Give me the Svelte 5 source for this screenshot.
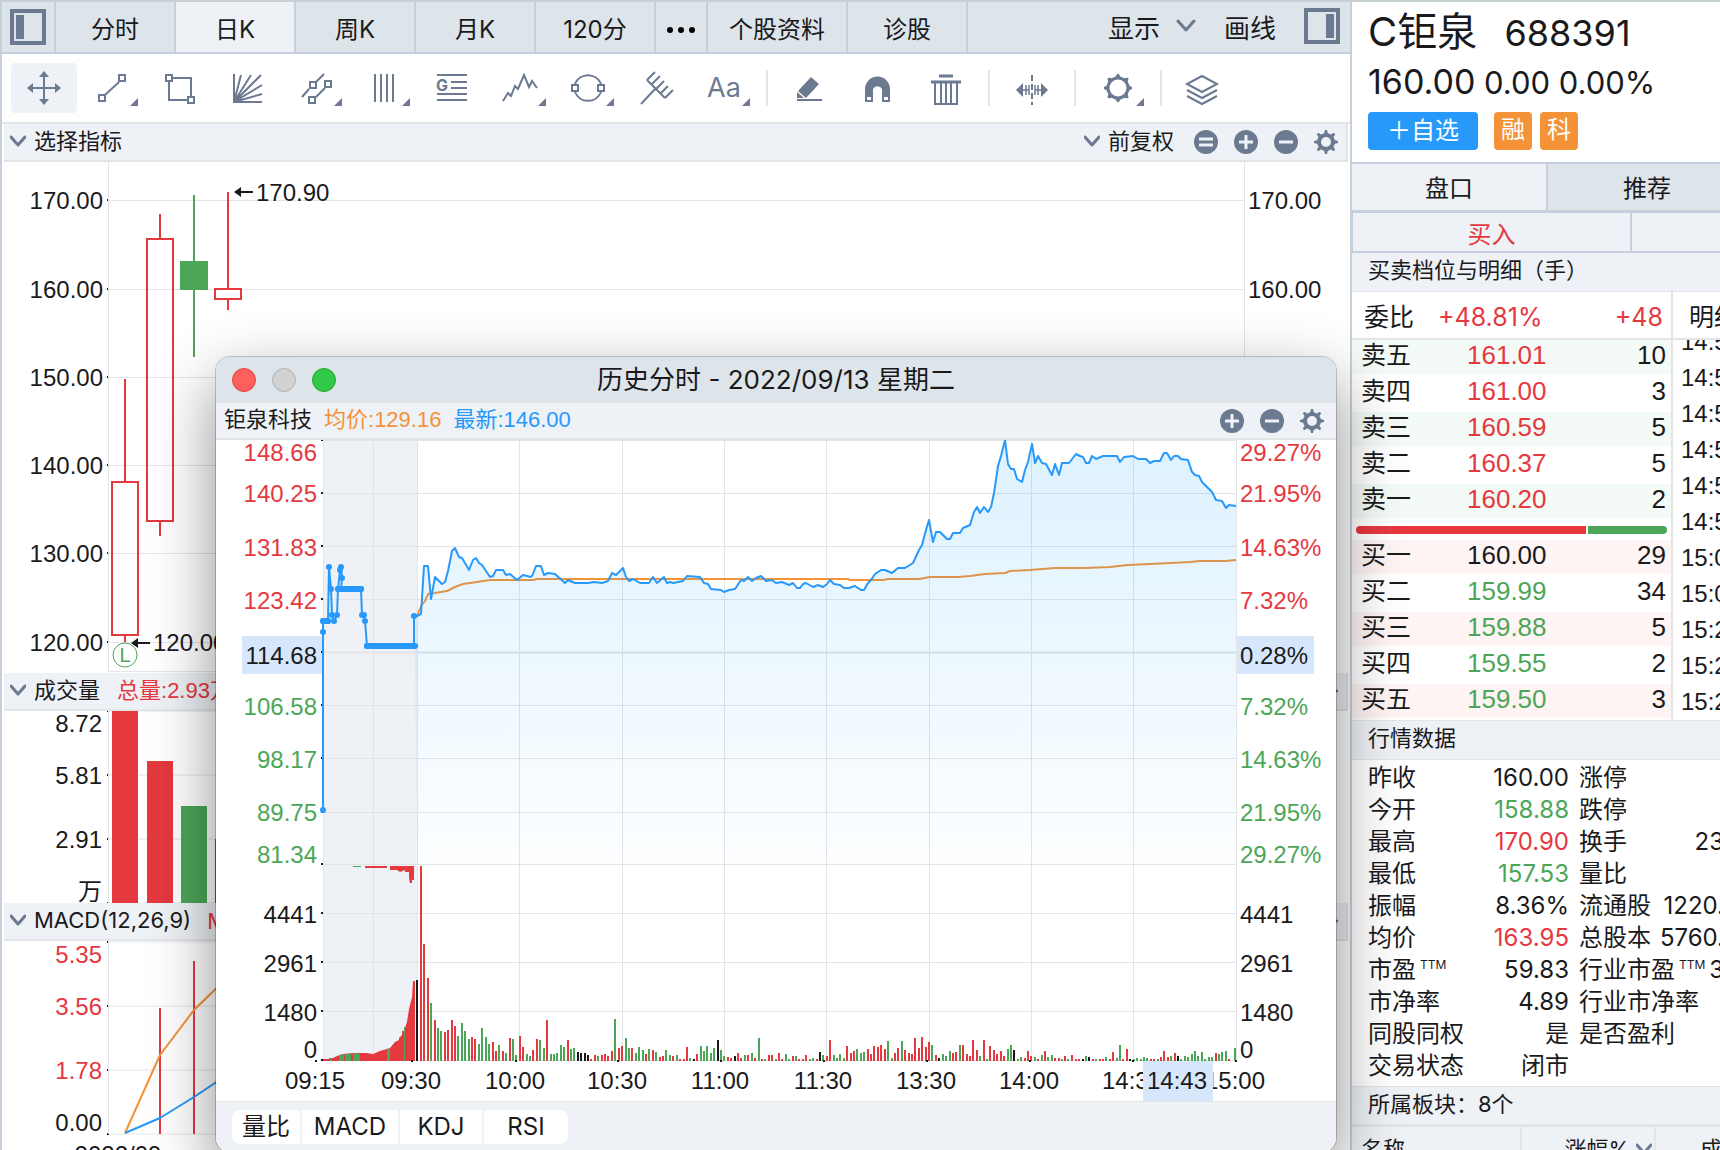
<script>
  let activePeriod = $state('日K');
  let sideTab = $state('盘口');

  const periods = ['分时', '日K', '周K', '月K', '120分'];

  const mainGrid = [
    ['170.00', 200],
    ['160.00', 289],
    ['150.00', 377],
    ['140.00', 465],
    ['130.00', 553],
    ['120.00', 642],
  ];
  const volumeGrid = [
    ['8.72', 711, 724],
    ['5.81', 775, 776],
    ['2.91', 839, 840],
    ['万', 903, 892],
  ];
  const macdGrid = [
    ['5.35', 942, 955, 'up'],
    ['3.56', 1006, 1007, 'up'],
    ['1.78', 1070, 1071, 'up'],
    ['0.00', 1134, 1123, 'flat'],
  ];

  const priceGrid = [
    ['148.66', '29.27%', 441, 454, 'up'],
    ['140.25', '21.95%', 494, 495, 'up'],
    ['131.83', '14.63%', 547, 549, 'up'],
    ['123.42', '7.32%', 600, 602, 'up'],
    ['114.68', '0.28%', 653, 657, 'flat'],
    ['106.58', '7.32%', 706, 708, 'down'],
    ['98.17', '14.63%', 759, 761, 'down'],
    ['89.75', '21.95%', 813, 814, 'down'],
    ['81.34', '29.27%', 865, 856, 'down'],
    ['4441', '4441', 914, 916, 'flat'],
    ['2961', '2961', 963, 965, 'flat'],
    ['1480', '1480', 1012, 1014, 'flat'],
    ['0', '0', 1061, 1051, 'flat'],
  ];
  const columns = [323, 373, 417, 519, 622, 724, 826, 929, 1031, 1133, 1236];
  const times = [
    ['09:15', 315],
    ['09:30', 411],
    ['10:00', 515],
    ['10:30', 617],
    ['11:00', 720],
    ['11:30', 823],
    ['13:30', 926],
    ['14:00', 1029],
    ['14:30', 1132],
    ['15:00', 1235],
  ];

  const price =
    '414,617 417,617 421,615 424,567 428,567 431,600 435,578 442,585 445,583 448,572 452,552 455,549 459,558 462,559 465,564 469,571 473,561 476,559 479,564 482,566 490,578 493,577 496,571 503,571 506,576 510,575 517,581 523,576 531,578 533,575 536,567 541,567 544,576 548,574 555,575 565,584 568,581 575,584 588,584 594,583 602,584 608,582 612,574 616,576 623,569 626,578 629,582 633,580 640,584 649,584 653,578 657,584 664,578 667,584 670,583 673,584 683,582 687,577 700,578 704,584 708,585 711,590 721,591 724,593 729,591 735,590 741,581 744,582 748,578 752,582 756,579 761,577 766,582 772,581 776,584 782,583 789,586 793,584 797,589 800,589 803,585 806,584 813,588 818,586 823,588 827,585 830,581 834,585 840,586 844,589 849,589 855,587 861,591 864,591 868,584 871,581 875,575 881,571 885,571 892,574 898,569 905,569 913,564 919,551 922,546 926,531 929,521 933,543 936,533 940,533 947,540 950,540 953,534 960,534 963,529 970,526 974,513 977,508 980,514 984,508 988,513 991,508 994,494 998,467 1001,457 1005,441 1008,465 1011,470 1014,470 1017,480 1022,483 1025,471 1028,463 1032,445 1035,464 1038,457 1042,464 1046,465 1052,476 1055,465 1059,476 1062,464 1069,464 1076,455 1080,457 1083,458 1086,464 1089,464 1092,457 1096,460 1103,457 1117,457 1120,463 1124,458 1133,457 1138,460 1146,460 1150,464 1154,462 1160,462 1164,454 1167,454 1171,461 1174,457 1178,457 1181,460 1188,461 1192,473 1195,476 1199,477 1202,483 1212,493 1216,501 1222,502 1226,509 1229,506 1236,507';
  const average =
    '417,617 421,607 425,602 428,595 435,594 447,592 455,588 463,585 477,583 490,581 533,581 537,580 848,580 850,581 883,581 888,580 919,580 930,578 958,578 970,577 985,575 1005,574 1010,572 1030,571 1055,569 1085,569 1110,568 1128,566 1150,565 1170,564 1190,563 1200,562 1225,562 1236,561';
  const auction = [
    [323, 811], [323, 633], [323, 622], [328, 622], [329, 568], [331, 590], [332, 616], [334, 622],
    [337, 616], [338, 590], [340, 571], [341, 568], [342, 579], [341, 590], [361, 590], [362, 616],
    [364, 616], [365, 622], [367, 647], [414, 647], [414, 617],
  ];

  // x,height pairs measured up from the volume baseline
  const volume = {
    up: '421,195 424,117 428,83 435,41 445,29 448,31 452,41 455,35 472,24 475,22 493,19 496,10 503,10 510,23 520,25 523,14 533,11 537,22 547,41 568,21 591,2 595,6 602,6 605,7 608,5 612,10 619,13 622,15 632,13 646,7 653,11 660,4 663,5 673,5 680,2 684,2 687,14 697,7 728,4 731,3 738,8 741,3 748,6 755,3 762,2 769,6 772,6 779,8 782,2 793,5 799,2 803,2 806,6 817,2 827,5 830,21 847,15 851,8 854,10 868,12 871,7 874,15 878,14 881,16 885,12 895,8 898,13 905,11 909,8 912,7 915,23 919,13 922,24 926,14 929,19 936,6 953,8 956,9 963,16 967,7 970,5 973,21 977,11 984,21 990,15 994,11 997,7 1001,10 1004,5 1025,3 1028,10 1031,5 1038,2 1045,10 1055,3 1059,3 1065,5 1072,6 1076,2 1079,2 1093,2 1100,2 1103,2 1110,2 1113,9 1123,2 1127,12 1151,2 1154,2 1161,4 1164,10 1168,4 1175,8 1216,8 1229,2',
    down: '431,58 438,33 441,30 458,25 462,38 465,30 469,22 479,17 482,33 486,24 489,17 499,16 506,8 513,22 516,6 527,7 530,5 540,21 544,13 551,7 554,7 557,8 561,16 564,14 571,12 574,13 598,5 615,42 626,23 629,13 636,8 639,14 643,11 649,12 656,9 666,11 670,6 677,6 690,3 701,15 704,10 707,15 711,8 714,13 721,11 724,5 745,6 752,8 759,23 765,2 776,2 786,7 789,2 796,5 810,2 813,3 823,6 834,6 837,3 840,7 844,3 857,12 861,8 864,9 888,20 892,3 902,20 932,16 943,7 946,5 950,10 960,16 980,5 987,2 1008,12 1011,16 1018,2 1021,4 1035,4 1042,6 1048,4 1052,6 1062,2 1068,2 1086,5 1096,2 1106,4 1117,3 1120,16 1134,2 1137,3 1141,2 1144,4 1147,3 1158,2 1171,5 1181,2 1185,5 1188,4 1192,7 1195,10 1198,5 1202,9 1205,2 1209,4 1212,4 1219,7 1222,9 1226,10 1235,13',
    flat: '417,81 578,9 581,8 585,8 588,6 694,2 718,21 735,5 820,9 939,3 1014,11 1083,2 1089,4 1130,2 1178,5',
  };
  const bars = (list) =>
    list
      .split(' ')
      .map((pair) => pair.split(','))
      .map(([x, h]) => `M${x} 1062v-${h}`)
      .join('');

  const asks = [
    ['卖五', '161.01', 10],
    ['卖四', '161.00', 3],
    ['卖三', '160.59', 5],
    ['卖二', '160.37', 5],
    ['卖一', '160.20', 2],
  ];
  const bids = [
    ['买一', '160.00', 29, 'flat'],
    ['买二', '159.99', 34, 'down'],
    ['买三', '159.88', 5, 'down'],
    ['买四', '159.55', 2, 'down'],
    ['买五', '159.50', 3, 'down'],
  ];
  const bidShare = 74;
  const ticks = ['14:5', '14:5', '14:5', '14:5', '14:5', '14:5', '15:0', '15:0', '15:2', '15:2', '15:2'];

  const quotes = [
    { label: '昨收', value: '160.00', label2: '涨停' },
    { label: '今开', value: '158.88', tone: 'down', label2: '跌停' },
    { label: '最高', value: '170.90', tone: 'up', label2: '换手', value2: '23' },
    { label: '最低', value: '157.53', tone: 'down', label2: '量比' },
    { label: '振幅', value: '8.36%', label2: '流通股', value2: '1220.' },
    { label: '均价', value: '163.95', tone: 'up', label2: '总股本', value2: '5760.' },
    { label: '市盈', ttm: true, value: '59.83', label2: '行业市盈', value2: '3' },
    { label: '市净率', value: '4.89', label2: '行业市净率' },
    { label: '同股同权', value: '是', label2: '是否盈利' },
    { label: '交易状态', value: '闭市', label2: '' },
  ];

  const teeth = [0, 45, 90, 135, 180, 225, 270, 315];
</script>

{#snippet chevron()}
  <svg class="chevron" width="16" height="12" viewBox="0 0 16 12"><path d="M1 2l7 8 7-8" /></svg>
{/snippet}

{#snippet gear()}
  <svg width="24" height="24" viewBox="-12 -12 24 24">
    <circle r="7" fill="none" stroke="#6b7a90" stroke-width="4" />
    {#each teeth as angle}
      <path d="M-2 -8l1 -4h2l1 4z" fill="#6b7a90" transform="rotate({angle})" />
    {/each}
  </svg>
{/snippet}

{#snippet round(d)}
  <svg width="24" height="24" viewBox="-12 -12 24 24">
    <circle r="12" fill="#6b7a90" />
    <path {d} stroke="#eef1f6" stroke-width="3" />
  </svg>
{/snippet}

{#snippet paneTools()}
  <div class="pane-tools">
    <button aria-label="放大">{@render round('M-7 0H7M0 -7V7')}</button>
    <button aria-label="缩小">{@render round('M-7 0H7')}</button>
    <button aria-label="设置">{@render gear()}</button>
  </div>
{/snippet}

{#snippet corner()}
  <path class="solid" d="M59 35v8h-8z" />
{/snippet}

<div class="app">
  <main>
    <nav class="periods">
      <button class="panel-toggle" aria-label="左侧栏">
        <svg width="36" height="36" viewBox="0 0 36 36">
          <rect x="2" y="2" width="32" height="32" fill="none" stroke="#6b7a90" stroke-width="4" />
          <rect x="6" y="6" width="8" height="24" fill="#6b7a90" />
        </svg>
      </button>
      {#each periods as period}
        <button
          class="period"
          class:active={activePeriod === period}
          onclick={() => (activePeriod = period)}>{period}</button
        >
      {/each}
      <button class="period more" aria-label="更多">
        <svg width="30" height="8" viewBox="0 0 30 8">
          <circle cx="4" cy="4" r="3" /><circle cx="15" cy="4" r="3" /><circle cx="26" cy="4" r="3" />
        </svg>
      </button>
      <button class="period wide">个股资料</button>
      <button class="period">诊股</button>
      <div class="view-tools">
        <button class="view">
          显示
          <svg class="chevron" width="20" height="14" viewBox="0 0 20 14"><path d="M2 2l8 9 8-9" /></svg>
        </button>
        <button class="view">画线</button>
        <button aria-label="右侧栏">
          <svg width="36" height="36" viewBox="0 0 36 36">
            <rect x="2" y="2" width="32" height="32" fill="none" stroke="#6b7a90" stroke-width="4" />
            <rect x="22" y="6" width="8" height="24" fill="#6b7a90" />
          </svg>
        </button>
      </div>
    </nav>

    <div class="toolbar" role="toolbar">
      <button class="tool active" aria-label="移动">
        <svg viewBox="0 0 66 50">
          <path d="M33 12v26M20 25h26" />
          <path class="solid" d="M33 8l5 6H28zM33 42l5-6H28zM16 25l6-5v10zM50 25l-6-5v10z" />
        </svg>
      </button>
      <button class="tool" aria-label="线段">
        <svg viewBox="0 0 66 50">
          <path d="M40 19L26 32M40 12h6v6h-6zM20 32h6v6h-6z" />{@render corner()}
        </svg>
      </button>
      <button class="tool" aria-label="矩形">
        <svg viewBox="0 0 66 50">
          <path d="M26 15h18v18M40 37H22V19M19 12h6v6h-6zM41 34h6v6h-6z" />
        </svg>
      </button>
      <button class="tool" aria-label="扇形线">
        <svg viewBox="0 0 66 50">
          <path d="M19 11v28h28M19 39l7-27M19 39l17-27M19 39l27-27M19 39l28-17M19 39l28-8" />
        </svg>
      </button>
      <button class="tool" aria-label="平行线">
        <svg viewBox="0 0 66 50">
          <path d="M19 34l7-8M33 19l8-8M42 25l-9 9M27 19h6v6h-6zM42 18h6v6h-6zM26 34h6v6h-6z" />
          {@render corner()}
        </svg>
      </button>
      <button class="tool" aria-label="竖线">
        <svg viewBox="0 0 66 50"><path d="M24 11v28M30 11v28M36 11v28M42 11v28" />{@render corner()}</svg>
      </button>
      <button class="tool" aria-label="黄金分割">
        <svg viewBox="0 0 66 50">
          <path d="M18 12h30M32 19h16M32 25h16M18 31h30M18 37h30" />
          <text class="letter-g" x="17" y="28">G</text>
        </svg>
      </button>
      <button class="tool" aria-label="波浪线">
        <svg viewBox="0 0 66 50">
          <path d="M16 38l5-8 3 3 4-10 3 3 6-14 5 12 3-6 5 7" />{@render corner()}
        </svg>
      </button>
      <button class="tool" aria-label="圆形">
        <svg viewBox="0 0 66 50">
          <path d="M20 21a14 14 0 0 1 26 0M20 29a14 14 0 0 0 26 0M17 22h6v6h-6zM43 22h6v6h-6z" />
          {@render corner()}
        </svg>
      </button>
      <button class="tool" aria-label="叉线">
        <svg viewBox="0 0 66 50">
          <path d="M18 41l15-16M24 17l18 18M24 17l8-8M28 22l9-9M33 26l8-8M37 31l8-8M42 35l8-8" />
        </svg>
      </button>
      <button class="tool" aria-label="文字">
        <svg viewBox="0 0 66 50"><text class="letters" x="16" y="34">Aa</text>{@render corner()}</svg>
      </button>
      <span class="sep"></span>
      <button class="tool" aria-label="画笔">
        <svg viewBox="0 0 66 50">
          <path d="M20 37h25" />
          <path class="solid" d="M34 14l8 7-13 14-8-7zM20 29l7 6h-7z" />
        </svg>
      </button>
      <button class="tool" aria-label="磁铁">
        <svg viewBox="0 0 66 50">
          <path class="solid" fill-rule="evenodd" d="M20 39V26a12 12 0 0 1 25 0v13h-8V26a5 5 0 0 0-9 0v13zM22 34v3h4v-3zM39 34v3h4v-3z" />
        </svg>
      </button>
      <button class="tool" aria-label="删除">
        <svg viewBox="0 0 66 50">
          <path d="M26 13h14M18 19h30" stroke-width="3" />
          <path d="M22 20v21h22V20M28 20v20M33 20v20M38 20v20" />
        </svg>
      </button>
      <span class="sep"></span>
      <button class="tool" aria-label="区间">
        <svg viewBox="0 0 66 50">
          <path d="M33 12v30" stroke-dasharray="6 3" />
          <path d="M22 27h8M36 27h8M27 22v10M30 22v10M36 22v10M39 22v10" stroke-width="1.5" />
          <path class="solid" d="M17 27l7-7v14zM49 27l-7-7v14z" />
        </svg>
      </button>
      <span class="sep"></span>
      <button class="tool" aria-label="画线设置">
        <svg viewBox="0 0 66 50">
          <circle cx="33" cy="25" r="10" stroke-width="3" />
          {#each teeth as angle}
            <path class="solid" d="M30 15l2-4h2l2 4z" transform="rotate({angle} 33 25)" />
          {/each}
          {@render corner()}
        </svg>
      </button>
      <span class="sep"></span>
      <button class="tool" aria-label="图层">
        <svg viewBox="0 0 66 50">
          <path d="M31 13l15 8-15 8-15-8zM16 27l15 8 15-8M16 33l15 8 15-8" />
        </svg>
      </button>
    </div>

    <header class="pane-head">
      <button class="pane-name">{@render chevron()}选择指标</button>
      <button class="adjust">{@render chevron()}前复权</button>
      <button aria-label="重置">{@render round('M-7 -3H7M-7 3H7')}</button>
      {@render paneTools()}
    </header>
    <svg class="chart" viewBox="2 162 1348 511">
      {#each mainGrid as [label, y]}
        <path class="grid" d="M108 {y}.5H1245" />
        <path class="tick" d="M107 {y}h2" />
        <text x="103" y={y + 9} text-anchor="end">{label}</text>
        {#if y < 350}
          <text x="1248" y={y + 9}>{label}</text>
        {/if}
      {/each}
      <path class="grid" d="M108.5 162V671.5H1245M1244.5 162V671" />
      <g class="candle up">
        <path d="M125 379V482M125 636V642M160 214V238M160 522V536M228 192V288M228 299V310" />
        <path d="M112 482H138V635H112zM147 239H173V521H147zM215 289H241V299H215z" />
      </g>
      <g class="candle down">
        <path d="M194 195V357" />
        <rect x="180" y="261" width="28" height="29" />
      </g>
      <path class="arrow" d="M238 192h15M135 643h15" />
      <path class="arrow-head" d="M234 192l7-5v10zM131 643l7-5v10z" />
      <text x="256" y="201">170.90</text>
      <text x="153" y="651">120.00</text>
      <circle class="low" cx="125" cy="655" r="12" />
      <text class="low-mark" x="125" y="662" text-anchor="middle">L</text>
    </svg>

    <header class="pane-head">
      <button class="pane-name">{@render chevron()}成交量</button>
      <span class="up stat">总量:2.93万</span>
      {@render paneTools()}
    </header>
    <svg class="chart" viewBox="2 711 1348 192">
      {#each volumeGrid as [label, line, y]}
        <path class="grid" d="M108 {line}H1245" />
        <path class="tick" d="M107 {line}h2" />
        <text x="102" y={y + 8} text-anchor="end">{label}</text>
      {/each}
      <path class="grid" d="M108.5 711V903" />
      <path class="bar-up" d="M112 711h26v192h-26zM147 761h26v142h-26zM215 839h26v64h-26z" />
      <path class="bar-down" d="M181 806h26v97h-26z" />
    </svg>

    <header class="pane-head">
      <button class="pane-name">{@render chevron()}MACD(12,26,9)</button>
      <span class="up macd">M</span>
      {@render paneTools()}
    </header>
    <svg class="chart" viewBox="2 941 1348 215">
      {#each macdGrid as [label, line, y, tone]}
        <path class="grid" d="M108 {line}H1245" />
        <path class="tick" d="M107 {line}h2" />
        <text class={tone} x="102" y={y + 8} text-anchor="end">{label}</text>
      {/each}
      <path class="grid" d="M108.5 941V1134" />
      <path class="stick" d="M160 1008V1134M194 961V1134" />
      <path class="line orange" d="M125 1133L160 1055L194 1010L230 975" />
      <path class="line blue" d="M125 1133L160 1118L194 1097L230 1073" />
      <text x="118" y="1163" text-anchor="middle">2022/09</text>
    </svg>

    <section class="window">
      <header class="title-bar">
        <button class="light close" aria-label="关闭"></button>
        <button class="light" aria-label="最小化"></button>
        <button class="light zoom" aria-label="最大化"></button>
        <h2>历史分时 - 2022/09/13 星期二</h2>
      </header>
      <div class="summary">
        <span>钜泉科技</span>
        <span class="avg">均价:129.16</span>
        <span class="last">最新:146.00</span>
        {@render paneTools()}
      </div>
      <svg class="chart" viewBox="216 441 1120 661">
        <defs>
          <linearGradient id="area" gradientUnits="userSpaceOnUse" x1="0" y1="441" x2="0" y2="866">
            <stop offset="0" stop-color="#29a8fb" stop-opacity="0.16" />
            <stop offset="0.4" stop-color="#29a8fb" stop-opacity="0.1" />
            <stop offset="1" stop-color="#29a8fb" stop-opacity="0.01" />
          </linearGradient>
        </defs>
        <rect class="pre-open" x="323" y="441" width="95" height="621" />
        {#each columns as x}
          <path class="grid" d="M{x}.5 441V1062" />
        {/each}
        <rect class="tag" x="242" y="637" width="80" height="38" />
        <rect class="tag" x="1237" y="637" width="77" height="38" />
        {#each priceGrid as [left, right, line, y, tone]}
          <path class="grid" class:middle={line === 653} d="M323 {line}.5H1236" />
          <path class="tick" d="M321 {line}h2" />
          <text class={tone} x="317" y={y + 8} text-anchor="end">{left}</text>
          <text class={tone} x="1240" y={y + 8}>{right}</text>
        {/each}

        <polyline class="line orange" points={average} />
        <polygon fill="url(#area)" points="417,866 {price} 1236,866" />
        <polyline class="line blue" points={price} />
        <polyline class="line blue" points={auction.join(' ')} />
        {#each auction as [x, y]}
          <circle class="dot" cx={x} cy={y} r="3" />
        {/each}
        <path class="thick" d="M338 590H361M367 647H415M323 622h5" />

        <path
          class="bar-up"
          d="M323 1062V1060H329V1059H333L337 1057L343 1055L353 1054H366L373 1055L380 1052L390 1049L395 1043L399 1041V1039L402 1036V1032H404L407 1023L409 1010L412 998L413 982H415V1062z"
        />
        <path class="bar-down" d="M330 1062v-3h2v3zM339 1062v-6l4-1h1v7zM345 1062v-7h6v7zM353 1062v-8l7 1v7zM387 1062v-12h3v12zM404 1062v-34h1v34z" />
        <path class="bar-up" d="M365 867h22v2h-22zM390 867h24v14h-2v3h-2l-1-5v-6h-4v-2l-5 2-3-2-7 0z" />
        <path class="bar-down" d="M353 867h8v1h-8z" />
        <path class="bar up" d={bars(volume.up)} />
        <path class="bar down" d={bars(volume.down)} />
        <path class="bar flat" d={bars(volume.flat)} />

        {#each times as [label, x]}
          <path class="tick" d="M{x} 1062h2" />
          <text {x} y="1090" text-anchor="middle">{label}</text>
        {/each}
        <rect class="tag" x="1143" y="1062" width="70" height="40" />
        <text x="1177" y="1090" text-anchor="middle">14:43</text>
      </svg>
      <footer class="indicators">
        <button>量比</button>
        <button class="macd-button">MACD</button>
        <button class="kdj-button">KDJ</button>
        <button class="rsi-button">RSI</button>
      </footer>
    </section>
  </main>

  <aside>
    <header class="stock">
      <h1>C钜泉 <span>688391</span></h1>
      <p class="quote"><span class="now">160.00</span> <span>0.00</span> <span>0.00%</span></p>
      <div class="badges">
        <button class="watch">＋自选</button>
        <span class="badge">融</span>
        <span class="badge">科</span>
      </div>
    </header>
    <div class="side-tabs">
      {#each ['盘口', '推荐'] as tab}
        <button class:active={sideTab === tab} onclick={() => (sideTab = tab)}>{tab}</button>
      {/each}
    </div>
    <div class="trade"><button class="up">买入</button><span></span></div>
    <h3>买卖档位与明细（手）</h3>

    <div class="depth">
      <div class="book">
        <div class="ratio">
          <span>委比</span><span class="up">+48.81%</span><span class="up sum">+48</span>
        </div>
        <table class="levels asks">
          <tbody>
            {#each asks as [name, value, count]}
              <tr><th>{name}</th><td class="up">{value}</td><td>{count}</td></tr>
            {/each}
          </tbody>
        </table>
        <div class="balance">
          <div class="buy" style="width: {bidShare}%"></div>
          <div class="sell"></div>
        </div>
        <table class="levels bids">
          <tbody>
            {#each bids as [name, value, count, tone]}
              <tr><th>{name}</th><td class={tone}>{value}</td><td>{count}</td></tr>
            {/each}
          </tbody>
        </table>
      </div>
      <div class="ticks">
        <div class="ratio">明细</div>
        <ol>
          {#each ticks as tick}
            <li>{tick}</li>
          {/each}
        </ol>
      </div>
    </div>

    <h3>行情数据</h3>
    <table class="quotes">
      <tbody>
        {#each quotes as q}
          <tr>
            <th>{q.label}{#if q.ttm}<sup>TTM</sup>{/if}</th>
            <td class={q.tone}>{q.value}</td>
            <th class="second">{q.label2}{#if q.ttm}<sup>TTM</sup>{/if}</th>
            <td class="last-cell">{q.value2 ?? ''}</td>
          </tr>
        {/each}
      </tbody>
    </table>
    <h3 class="boards-title">所属板块：8个</h3>
    <div class="boards">
      <span>名称</span>
      <span class="change">涨幅%{@render chevron()}</span>
      <span class="deal">成</span>
    </div>
  </aside>
</div>

<style>
  :global(body) {
    margin: 0;
  }
  .app {
    --ink: #1a1a1c;
    --slate: #6b7a90;
    --edge: #c6d0dc;
    --rule: #e3e4e6;
    --bar: #dde4ea;
    --pale: #eef1f6;
    --red: #e5383f;
    --green: #4ca657;
    --blue: #2699fb;
    --orange: #f39237;

    display: flex;
    box-sizing: border-box;
    height: 100vh;
    border-top: 2px solid #c7d0d3;
    overflow: hidden;
    background: #fff;
    color: var(--ink);
    font-family: Inter, 'Noto Sans CJK SC', sans-serif;
    font-size: 24px;
  }
  button {
    padding: 0;
    border: 0;
    background: none;
    color: inherit;
    font: inherit;
    cursor: pointer;
  }
  svg {
    display: block;
  }
  h1,
  h2,
  h3,
  p,
  ol {
    margin: 0;
    padding: 0;
    font-weight: 400;
  }
  .up {
    color: var(--red);
    fill: var(--red);
    stroke: none;
  }
  .down {
    color: var(--green);
    fill: var(--green);
  }
  main {
    position: relative;
    flex: 1;
    min-width: 0;
    border-left: 2px solid var(--edge);
  }

  /* period tabs */
  .periods {
    display: flex;
    height: 50px;
    border-bottom: 2px solid var(--edge);
    background: var(--bar);
  }
  .panel-toggle {
    box-sizing: border-box;
    width: 54px;
    padding-left: 8px;
    border-right: 2px solid var(--edge);
  }
  .period {
    box-sizing: border-box;
    width: 120px;
    border-right: 2px solid var(--edge);
  }
  .period.active {
    background: var(--pale);
  }
  .period.more {
    display: grid;
    place-content: center;
    width: 52px;
    padding-top: 6px;
  }
  .period.wide {
    width: 140px;
  }
  .view-tools {
    display: flex;
    align-items: center;
    gap: 28px;
    margin-left: auto;
    padding: 0 10px 2px 0;
  }
  .view {
    display: flex;
    align-items: center;
    gap: 16px;
    font-size: 26px;
  }
  .chevron {
    fill: none;
    stroke: var(--slate);
    stroke-width: 3;
    stroke-linejoin: round;
    stroke-linecap: round;
  }

  /* drawing tools */
  .toolbar {
    display: flex;
    align-items: center;
    gap: 2px;
    height: 68px;
    padding-left: 9px;
    border-bottom: 2px solid var(--rule);
  }
  .tool {
    width: 66px;
    height: 50px;
    border-radius: 4px;
  }
  .tool.active {
    background: var(--pale);
  }
  .tool svg {
    fill: none;
    stroke: var(--slate);
    stroke-width: 2;
  }
  .tool .solid,
  .tool text {
    fill: var(--slate);
    stroke: none;
  }
  .letter-g {
    font-size: 16px;
    font-weight: 700;
  }
  .letters {
    font-size: 27px;
  }
  .sep {
    width: 2px;
    height: 36px;
    margin: 0 7px;
    background: var(--rule);
  }

  .pane-head {
    display: flex;
    align-items: center;
    box-sizing: border-box;
    height: 38px;
    margin: 0 2px;
    padding-right: 8px;
    border: solid var(--rule);
    border-width: 0 2px 2px 0;
    background: var(--pale);
    font-size: 22px;
    line-height: 30px;
  }
  .pane-name {
    display: flex;
    align-items: center;
    gap: 8px;
    padding: 0 0 3px 6px;
  }
  .adjust {
    display: flex;
    align-items: center;
    gap: 8px;
    margin: 0 20px 0 auto;
    padding-bottom: 3px;
  }
  .adjust ~ .pane-tools {
    margin-left: 16px;
  }
  .pane-tools {
    display: flex;
    gap: 16px;
    margin-left: auto;
  }
  .stat {
    margin-left: 17px;
    font-family: 'Liberation Sans', 'Noto Sans CJK SC', sans-serif;
  }
  .macd {
    margin-left: 16px;
  }

  /* charts */
  .chart {
    width: 100%;
    height: auto;
    font-family: 'Liberation Sans', 'Noto Sans CJK SC', sans-serif;
    fill: var(--ink);
  }
  .grid {
    fill: none;
    stroke: var(--rule);
    stroke-width: 1;
  }
  .grid.middle {
    stroke-width: 2;
  }
  .tick {
    stroke: var(--ink);
    stroke-width: 2;
  }
  .candle {
    fill: none;
    stroke-width: 2;
  }
  .candle.up {
    fill: none;
    stroke: var(--red);
  }
  .candle.down {
    stroke: var(--green);
  }
  .candle.down rect {
    fill: var(--green);
    stroke: none;
  }
  .arrow {
    stroke: var(--ink);
    stroke-width: 2;
  }
  .low {
    fill: #fff;
    stroke: var(--green);
  }
  .low-mark {
    fill: var(--green);
    font-size: 20px;
  }
  .bar-up {
    fill: var(--red);
  }
  .bar-down {
    fill: var(--green);
  }
  .stick {
    stroke: var(--red);
    stroke-width: 2;
  }
  .line {
    fill: none;
    stroke-width: 2;
    stroke-linejoin: round;
  }
  .orange {
    stroke: var(--orange);
  }
  .blue {
    stroke: var(--blue);
  }
  .dot {
    fill: var(--blue);
  }
  .thick {
    stroke: var(--blue);
    stroke-width: 6;
    stroke-linecap: round;
  }
  .pre-open {
    fill: var(--pale);
  }
  .tag {
    fill: #d6e7fb;
  }
  .bar {
    stroke-width: 2;
  }
  .bar.up {
    stroke: var(--red);
  }
  .bar.down {
    stroke: var(--green);
  }
  .bar.flat {
    stroke: var(--ink);
  }

  /* floating window */
  .window {
    position: absolute;
    top: 355px;
    left: 214px;
    right: 14px;
    z-index: 2;
    overflow: hidden;
    border-radius: 14px;
    background: #fff;
    box-shadow:
      0 0 0 1px rgba(0, 0, 0, 0.2),
      0 24px 64px rgba(0, 0, 0, 0.45);
  }
  .title-bar {
    display: flex;
    align-items: center;
    gap: 16px;
    height: 45px;
    padding: 0 16px;
    background: var(--bar);
  }
  .title-bar h2 {
    flex: 1;
    margin-right: 120px;
    font-size: 26px;
    line-height: 44px;
    text-align: center;
  }
  .light {
    box-sizing: border-box;
    width: 24px;
    height: 24px;
    border: 1px solid #b4b4b4;
    border-radius: 50%;
    background: #d1d1d1;
  }
  .light.close {
    border-color: #e24640;
    background: #fd605c;
  }
  .light.zoom {
    border-color: #22a833;
    background: #33c948;
  }
  .summary {
    display: flex;
    align-items: center;
    gap: 12px;
    box-sizing: border-box;
    height: 38px;
    padding: 0 12px 0 8px;
    border: solid var(--rule);
    border-width: 1px 0 2px;
    background: var(--pale);
    font-family: 'Liberation Sans', 'Noto Sans CJK SC', sans-serif;
    font-size: 22px;
    line-height: 30px;
  }
  .summary span {
    padding-bottom: 2px;
  }
  .avg {
    color: var(--orange);
  }
  .last {
    color: var(--blue);
  }
  .indicators {
    display: flex;
    gap: 2px;
    height: 34px;
    padding: 8px 16px;
    border-top: 1px solid var(--rule);
    background: var(--pale);
  }
  .indicators button {
    width: 68px;
    background: #fff;
    line-height: 34px;
  }
  .indicators button:first-child {
    border-radius: 8px 0 0 8px;
  }
  .indicators button:last-child {
    border-radius: 0 8px 8px 0;
  }
  .indicators .macd-button {
    width: 96px;
  }
  .indicators .kdj-button {
    width: 82px;
  }
  .indicators .rsi-button {
    width: 84px;
  }

  /* quote panel */
  aside {
    flex: 0 0 368px;
    overflow: hidden;
    border-left: 2px solid var(--edge);
  }
  .stock {
    box-sizing: border-box;
    height: 162px;
    padding: 6px 16px 0;
    border-bottom: 2px solid var(--edge);
    white-space: nowrap;
  }
  h1 {
    font-size: 40px;
    line-height: 48px;
  }
  h1 span {
    margin-left: 16px;
    font-size: 36px;
  }
  .quote {
    font-size: 31px;
    line-height: 50px;
  }
  .now {
    font-size: 34px;
  }
  .badges {
    display: flex;
    gap: 8px;
    margin-top: 4px;
    color: #fff;
    line-height: 38px;
  }
  .watch {
    width: 110px;
    margin-right: 8px;
    border-radius: 4px;
    background: var(--blue);
  }
  .badge {
    width: 38px;
    height: 38px;
    border-radius: 4px;
    background: var(--orange);
    line-height: 36px;
    text-align: center;
  }
  .side-tabs {
    display: flex;
    height: 46px;
    border-bottom: 3px solid var(--edge);
  }
  .side-tabs button {
    flex: 0 0 198px;
    padding-bottom: 2px;
    background: var(--bar);
  }
  .side-tabs .active {
    box-sizing: border-box;
    flex-basis: 196px;
    border-right: 2px solid var(--edge);
    background: var(--pale);
  }
  .trade {
    display: flex;
    height: 38px;
    border-bottom: 2px solid var(--edge);
    background: var(--pale);
  }
  .trade button {
    box-sizing: border-box;
    width: 280px;
    border: solid var(--edge);
    border-width: 0 2px 0 1px;
  }
  h3 {
    box-sizing: border-box;
    height: 39px;
    padding-left: 16px;
    border-bottom: 1px solid var(--rule);
    background: var(--pale);
    font-size: 22px;
    line-height: 35px;
  }
  .depth {
    display: flex;
    height: 428px;
    border-bottom: 1px solid var(--rule);
    overflow: hidden;
  }
  .book {
    flex: 0 0 319px;
    border-right: 2px solid var(--rule);
  }
  .ratio {
    display: flex;
    box-sizing: border-box;
    height: 48px;
    padding: 0 8px 0 12px;
    border-bottom: 2px solid var(--rule);
    font-size: 25px;
    line-height: 50px;
  }
  .ratio .up {
    margin-left: 24px;
  }
  .ratio .sum {
    margin-left: auto;
  }
  .levels {
    width: 100%;
    border-collapse: collapse;
    font-family: 'Liberation Sans', 'Noto Sans CJK SC', sans-serif;
    font-size: 26px;
    line-height: 31px;
  }
  .levels th,
  .levels td {
    height: 34px;
    padding: 0;
    border-bottom: 2px solid #fff;
    text-align: left;
    vertical-align: top;
    font-weight: 400;
  }
  .levels th {
    width: 106px;
    padding-left: 9px;
    font-size: 25px;
  }
  .levels td:last-child {
    padding-right: 5px;
    text-align: right;
  }
  .asks tr:nth-child(odd) {
    background: #f4faf5;
  }
  .bids tr:nth-child(odd) {
    background: #fef4f4;
  }
  .balance {
    display: flex;
    gap: 2px;
    height: 8px;
    margin: 6px 4px;
  }
  .buy {
    border-radius: 4px 0 0 4px;
    background: var(--red);
  }
  .sell {
    flex: 1;
    border-radius: 0 4px 4px 0;
    background: var(--green);
  }
  .ticks {
    display: flex;
    flex: 0 0 200px;
    flex-direction: column;
  }
  .ticks .ratio {
    flex: none;
    padding-left: 16px;
  }
  .ticks ol {
    display: flex;
    flex: 1;
    flex-direction: column;
    justify-content: flex-end;
    min-height: 0;
    overflow: hidden;
    padding-left: 8px;
    list-style: none;
    font-family: 'Liberation Sans', sans-serif;
    line-height: 36px;
  }
  .quotes {
    width: 372px;
    margin: 2px 0 4px;
    border-spacing: 0;
    table-layout: fixed;
    line-height: 32px;
    white-space: nowrap;
  }
  .quotes th,
  .quotes td {
    height: 32px;
    padding: 0;
    font-weight: 400;
    text-align: left;
  }
  .quotes th:first-child {
    width: 125px;
    padding-left: 16px;
  }
  .quotes td {
    width: 76px;
    text-align: right;
  }
  .quotes .second {
    width: 80px;
    padding-left: 10px;
  }
  .quotes .last-cell {
    width: auto;
  }
  sup {
    margin-left: 4px;
    font-size: 12px;
    line-height: 0;
  }
  .boards-title {
    height: 41px;
    border-top: 1px solid var(--rule);
    border-bottom: 3px solid var(--rule);
  }
  .boards {
    display: flex;
    background: var(--pale);
    font-size: 22px;
    line-height: 44px;
  }
  .boards span {
    box-sizing: border-box;
    flex: 0 0 170px;
    padding-left: 9px;
    border-right: 2px solid var(--rule);
  }
  .boards .change {
    display: flex;
    flex-basis: 134px;
    align-items: center;
    justify-content: flex-end;
    gap: 6px;
    padding: 0 2px 0 0;
  }
  .boards .deal {
    padding-left: 44px;
  }
</style>
